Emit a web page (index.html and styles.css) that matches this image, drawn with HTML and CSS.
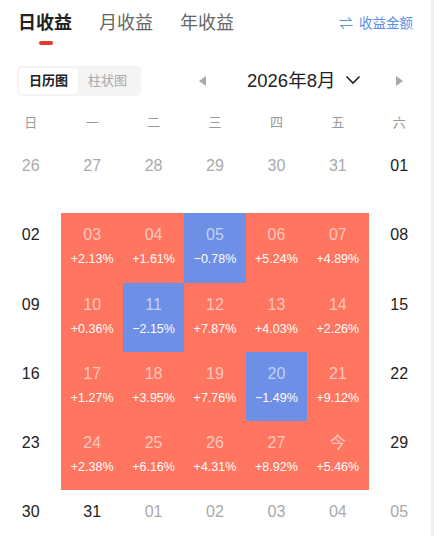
FILE: index.html
```html
<!DOCTYPE html>
<html lang="zh-CN">

<head>
  <meta charset="UTF-8" />
  <meta name="viewport" content="width=device-width, initial-scale=1.0" />
  <title>日收益</title>
  <link rel="stylesheet" href="styles.css">
</head>

<body>
  <main class="page">
    <header class="tabs">
      <nav class="tabs_list">
        <span class="tabs_item tabs_item-active">日收益</span>
        <span class="tabs_item">月收益</span>
        <span class="tabs_item">年收益</span>
      </nav>
      <span class="tabs_switch"><span class="tabs_switch-icon">⇌</span>收益金额</span>
    </header>

    <section class="toolbar">
      <div class="segment">
        <span class="segment_item segment_item-active">日历图</span>
        <span class="segment_item">柱状图</span>
      </div>
      <div class="month">
        <svg class="month_arrow" width="8" height="10" viewBox="0 0 8 10"><path d="M7 0 L0 5 L7 10 Z" fill="#a8a8a8"/></svg>
        <span class="month_label">2026年8月</span>
        <svg class="month_chevron" width="16" height="10" viewBox="0 0 16 10"><path d="M1.5 1.5 L8 8 L14.5 1.5" fill="none" stroke="#222" stroke-width="1.6"/></svg>
        <svg class="month_arrow month_arrow-right" width="8" height="10" viewBox="0 0 8 10"><path d="M1 0 L8 5 L1 10 Z" fill="#a8a8a8"/></svg>
      </div>
    </section>

    <div class="weekdays">
      <span>日</span><span>一</span><span>二</span><span>三</span><span>四</span><span>五</span><span>六</span>
    </div>

    <div class="calendar">
      <!-- row 1 -->
      <div class="day day-out"><span class="day_num">26</span></div>
      <div class="day day-out"><span class="day_num">27</span></div>
      <div class="day day-out"><span class="day_num">28</span></div>
      <div class="day day-out"><span class="day_num">29</span></div>
      <div class="day day-out"><span class="day_num">30</span></div>
      <div class="day day-out"><span class="day_num">31</span></div>
      <div class="day"><span class="day_num">01</span></div>
      <!-- row 2 -->
      <div class="day"><span class="day_num">02</span></div>
      <div class="day day-up"><span class="day_num">03</span><span class="day_pct">+2.13%</span></div>
      <div class="day day-up"><span class="day_num">04</span><span class="day_pct">+1.61%</span></div>
      <div class="day day-down"><span class="day_num">05</span><span class="day_pct">−0.78%</span></div>
      <div class="day day-up"><span class="day_num">06</span><span class="day_pct">+5.24%</span></div>
      <div class="day day-up"><span class="day_num">07</span><span class="day_pct">+4.89%</span></div>
      <div class="day"><span class="day_num">08</span></div>
      <!-- row 3 -->
      <div class="day"><span class="day_num">09</span></div>
      <div class="day day-up"><span class="day_num">10</span><span class="day_pct">+0.36%</span></div>
      <div class="day day-down"><span class="day_num">11</span><span class="day_pct">−2.15%</span></div>
      <div class="day day-up"><span class="day_num">12</span><span class="day_pct">+7.87%</span></div>
      <div class="day day-up"><span class="day_num">13</span><span class="day_pct">+4.03%</span></div>
      <div class="day day-up"><span class="day_num">14</span><span class="day_pct">+2.26%</span></div>
      <div class="day"><span class="day_num">15</span></div>
      <!-- row 4 -->
      <div class="day"><span class="day_num">16</span></div>
      <div class="day day-up"><span class="day_num">17</span><span class="day_pct">+1.27%</span></div>
      <div class="day day-up"><span class="day_num">18</span><span class="day_pct">+3.95%</span></div>
      <div class="day day-up"><span class="day_num">19</span><span class="day_pct">+7.76%</span></div>
      <div class="day day-down"><span class="day_num">20</span><span class="day_pct">−1.49%</span></div>
      <div class="day day-up"><span class="day_num">21</span><span class="day_pct">+9.12%</span></div>
      <div class="day"><span class="day_num">22</span></div>
      <!-- row 5 -->
      <div class="day"><span class="day_num">23</span></div>
      <div class="day day-up"><span class="day_num">24</span><span class="day_pct">+2.38%</span></div>
      <div class="day day-up"><span class="day_num">25</span><span class="day_pct">+6.16%</span></div>
      <div class="day day-up"><span class="day_num">26</span><span class="day_pct">+4.31%</span></div>
      <div class="day day-up"><span class="day_num">27</span><span class="day_pct">+8.92%</span></div>
      <div class="day day-up"><span class="day_num">今</span><span class="day_pct">+5.46%</span></div>
      <div class="day"><span class="day_num">29</span></div>
      <!-- row 6 -->
      <div class="day"><span class="day_num">30</span></div>
      <div class="day"><span class="day_num">31</span></div>
      <div class="day day-out"><span class="day_num">01</span></div>
      <div class="day day-out"><span class="day_num">02</span></div>
      <div class="day day-out"><span class="day_num">03</span></div>
      <div class="day day-out"><span class="day_num">04</span></div>
      <div class="day day-out"><span class="day_num">05</span></div>
    </div>
  </main>
</body>
</html>
```

FILE: styles.css
```css
html,
body {
  margin: 0;
  padding: 0;
  background: #fff;
}

html {
  height: 536px;
  overflow: hidden;
}

body {
  height: 536px;
  overflow: hidden;
  border-right: solid 3px #efefef;
  box-sizing: border-box;
}

.page {
  width: 431px;
  font-family: "Liberation Sans", "Noto Sans CJK SC", sans-serif;
  color: #222;
}

/* top tabs */
.tabs {
  display: flex;
  justify-content: space-between;
  align-items: flex-start;
  height: 52px;
  padding: 0 18px;
}

.tabs_list {
  display: flex;
  gap: 27px;
  padding-top: 10px;
}

.tabs_item {
  position: relative;
  font-size: 18px;
  line-height: 26px;
  color: #666;
}

.tabs_item-active {
  color: #222;
  font-weight: 600;
}

.tabs_item-active::after {
  content: "";
  position: absolute;
  left: 21px;
  top: 31px;
  width: 14px;
  height: 4px;
  border-radius: 2px;
  background: #e8372f;
}

.tabs_switch {
  padding-top: 14px;
  font-size: 13.5px;
  line-height: 18px;
  color: #5a8fe6;
}

.tabs_switch-icon {
  margin-right: 6px;
  font-size: 14px;
}

/* toolbar */
.toolbar {
  display: flex;
  align-items: center;
  padding: 14px 0 0 17px;
}

.segment {
  display: flex;
  padding: 2px;
  width: 120px;
  height: 26px;
  border-radius: 5px;
  background: #f4f4f4;
}

.segment_item {
  width: 59px;
  font-size: 13px;
  line-height: 26px;
  text-align: center;
  color: #aaa;
}

.segment_item-active {
  border-radius: 4px;
  background: #fff;
  color: #222;
  font-weight: 600;
}

.month {
  display: flex;
  align-items: center;
  margin-left: 58px;
}

.month_label {
  margin-left: 40px;
  font-size: 18.5px;
  line-height: 26px;
}

.month_chevron {
  margin-left: 10px;
  margin-top: -2px;
}

.month_arrow-right {
  margin-left: 34px;
}

/* weekdays */
.weekdays {
  display: grid;
  grid-template-columns: repeat(7, 61.43px);
  margin-top: 10px;
  height: 34px;
  font-size: 13px;
  line-height: 34px;
  text-align: center;
  color: #999;
}

/* calendar */
.calendar {
  display: grid;
  grid-template-columns: repeat(7, 61.43px);
  grid-auto-rows: 69.3px;
  margin-top: 4px;
}

.day {
  display: flex;
  flex-direction: column;
  align-items: center;
  padding-top: 12px;
  box-sizing: border-box;
}

.day_num {
  font-size: 16px;
  line-height: 20px;
  color: #222;
}

.day_pct {
  margin-top: 6px;
  font-size: 12.5px;
  line-height: 16px;
  color: #fff;
}

.day-out .day_num {
  color: #aaa;
}

.day-up {
  background: #ff7560;
}

.day-down {
  background: #6d8fe5;
}

.day-up .day_num,
.day-down .day_num {
  color: rgba(255, 255, 255, 0.6);
}
```
